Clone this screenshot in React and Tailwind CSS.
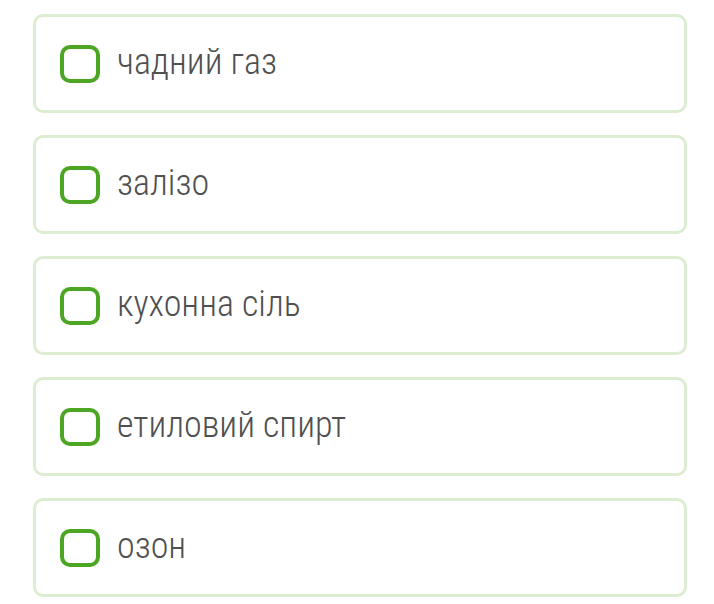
const OPTIONS = ['чадний газ', 'залізо', 'кухонна сіль', 'етиловий спирт', 'озон'];

export default function App() {
  return (
    <div className="min-h-[604px] bg-white pt-[14px] pl-[33px]" style={{ fontFamily: '"Roboto Condensed", Roboto, "Liberation Sans", sans-serif' }}>
      <div className="flex w-[654px] flex-col gap-[22px]">
        {OPTIONS.map((label) => (
          <label
            key={label}
            className="flex h-[99px] items-center rounded-[10px] border-[3px] border-[#dcedd2] bg-white pl-[24px]"
          >
            <span className="h-[38px] w-[40px] shrink-0 rounded-[10px] border-[4px] border-[#4ca623] bg-white" />
            <span className="ml-[17px] mb-[3px] whitespace-nowrap text-[36px] font-light leading-none text-[#505050]">
              {label}
            </span>
          </label>
        ))}
      </div>
    </div>
  );
}
